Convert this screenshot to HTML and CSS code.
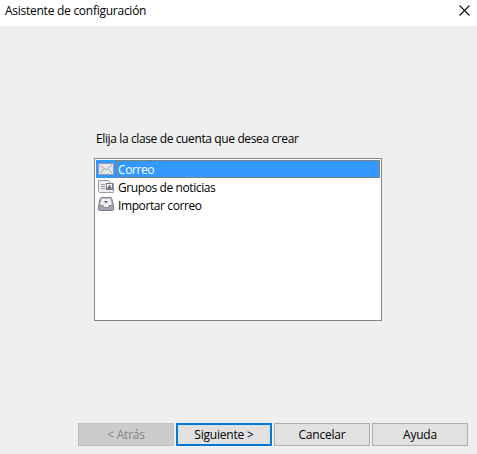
FILE: index.html
```html
<!DOCTYPE html>
<html lang="es">
<head>
<meta charset="utf-8">
<title>Asistente de configuración</title>
<link rel="stylesheet" href="styles.css">
</head>
<body>
<div class="dialog">
  <header class="titlebar">
    <span class="title">Asistente de configuración</span>
    <svg class="close" width="11" height="11" viewBox="0 0 11 11"><path d="M.5 .5l10 10M10.500 .5l-10 10"/></svg>
  </header>
  <main class="content">
    <p class="prompt">Elija la clase de cuenta que desea crear</p>
    <ul class="list">
      <li class="row selected">
        <svg class="icon" width="16" height="16" viewBox="0 0 16 16">
          <rect x=".5" y="2.500" width="15" height="11" rx="1" fill="#e6e6ea" stroke="#9a9ba6"/>
          <path d="M2 4l6 5 6-5M2 12l4-4M14 12l-4-4" fill="none" stroke="#94959f" stroke-width=".8"/>
        </svg>
        <span class="name">Correo</span>
      </li>
      <li class="row">
        <svg class="icon" width="16" height="16" viewBox="0 0 16 16">
          <path d="M.5 1.500h10l3 3h2v9H1.500l-1-1z" fill="#ececf0" stroke="#9a9ba6"/>
          <path d="M3 5.500h4M3 7.500h4M3 9.500h4" stroke="#a0a1ab"/>
          <rect x="8.500" y="4.500" width="6" height="6" fill="#fff" stroke="#777884"/>
          <path d="M10.500 6h2v2h1v2h-4V8h1z" fill="#6d6e7a"/>
        </svg>
        <span class="name">Grupos de noticias</span>
      </li>
      <li class="row">
        <svg class="icon" width="16" height="16" viewBox="0 0 16 16">
          <path d="M3.500 .5h9q1 0 1.200 1l1.800 7v4q0 1-1 1h-13q-1 0-1-1v-4l1.800-7Q2.500 .5 3.500 .5z" fill="#a3a4af" stroke="#7d7e89"/>
          <path d="M3.500 1.500h9l1.500 7h-3q0 2-1.500 2h-3Q5 10.500 5 8.500H2z" fill="#ededf1"/>
          <path d="M2 8.500h3q0 2 1.500 2h3q1.500 0 1.500-2h3" fill="none" stroke="#74757f" stroke-width=".8"/>
          <path d="M6 4h4L8 6.500z" fill="#61626e"/>
        </svg>
        <span class="name">Importar correo</span>
      </li>
    </ul>
  </main>
  <footer class="buttons">
    <button class="button" disabled>&lt; Atrás</button>
    <button class="button primary">Siguiente &gt;</button>
    <button class="button">Cancelar</button>
    <button class="button">Ayuda</button>
  </footer>
</div>
</body>
</html>
```

FILE: styles.css
```css
* { box-sizing: border-box; }
body { margin: 0; font: 12px/18px "Open Sans", "Noto Sans", sans-serif; color: #000; }
.dialog { display: flex; flex-direction: column; width: 477px; height: 454px; background: #efefef; overflow: hidden; }
.titlebar { display: flex; justify-content: space-between; height: 26px; padding: 2px 7px 0 5px; background: #fff; white-space: nowrap; }
.close { margin-top: 3px; fill: none; stroke: #111; stroke-width: 1.1; }
.content { flex: 1; padding: 104px 95px 0 94px; }
.prompt { margin: 0 0 10px 2px; white-space: nowrap; }
.list { height: 163px; margin: 0; padding: 1px; border: 1px solid #828790; background: #fff; list-style: none; }
.row { display: flex; align-items: center; height: 18px; padding-left: 2px; white-space: nowrap; }
.icon { flex: none; margin-right: 2px; }
.name { padding-left: 2px; height: 18px; line-height: 19px; }
.selected { background: #3399ff; color: #fff; }
.selected .name { flex: 1; line-height: 17px; border: 1px dotted #cc6600; padding-left: 1px; }
.buttons { display: flex; gap: 2px; padding: 0 9px 8px 78px; }
.button { display: flex; justify-content: center; align-items: center; width: 96px; height: 23px; padding: 0; border: 1px solid #adadad; background: #e1e1e1; color: #000; font: inherit; white-space: nowrap; }
.button:disabled { border-color: #bfbfbf; background: #ccc; color: #838383; }
.primary { border: 2px solid #0078d7; }
.title { letter-spacing: -.26px; }
.prompt { letter-spacing: -.38px; }
.name { letter-spacing: -.4px; }
.button { letter-spacing: -.2px; }
```
